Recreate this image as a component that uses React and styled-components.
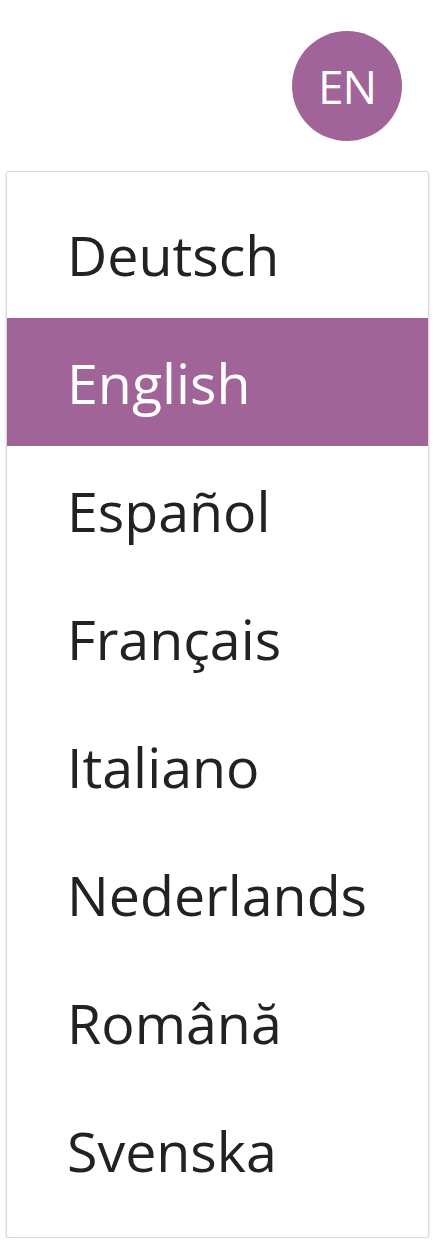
import React from "react";
import styled, { createGlobalStyle } from "styled-components";

const Global = createGlobalStyle`
  html, body { margin: 0; padding: 0; background: #fff; }
  body { font-family: "Open Sans", "Noto Sans", sans-serif; }
`;

const Page = styled.div`
  display: flex;
  flex-direction: column;
  padding: 31px 6px 0 6px;
`;

const Header = styled.div`
  display: flex;
  justify-content: flex-end;
  padding-right: 27px;
`;

const Avatar = styled.div`
  width: 110px;
  height: 110px;
  border-radius: 50%;
  background: #a06498;
  color: #fff;
  display: flex;
  align-items: center;
  justify-content: center;
  font-size: 46px;
  letter-spacing: -1px;
`;

const Menu = styled.ul`
  list-style: none;
  margin: 30px 0 0 0;
  padding: 18px 0 23px 0;
  background: #fff;
  border: 1px solid #d9d9d9;
  border-radius: 3px;
  box-shadow: 0 1px 3px rgba(0, 0, 0, 0.14);
  width: 423px;
  box-sizing: border-box;
`;

const Item = styled.li`
  height: 128px;
  display: flex;
  align-items: center;
  padding-left: 60px;
  font-size: 55.5px;
  color: ${(p) => (p.$active ? "#fff" : "#222")};
  background: ${(p) => (p.$active ? "#a06498" : "transparent")};
`;

const languages = [
  "Deutsch",
  "English",
  "Español",
  "Français",
  "Italiano",
  "Nederlands",
  "Română",
  "Svenska",
];

export default function App() {
  return (
    <>
      <Global />
      <Page>
        <Header>
          <Avatar>EN</Avatar>
        </Header>
        <Menu>
          {languages.map((l) => (
            <Item key={l} $active={l === "English"}>
              {l}
            </Item>
          ))}
        </Menu>
      </Page>
    </>
  );
}
